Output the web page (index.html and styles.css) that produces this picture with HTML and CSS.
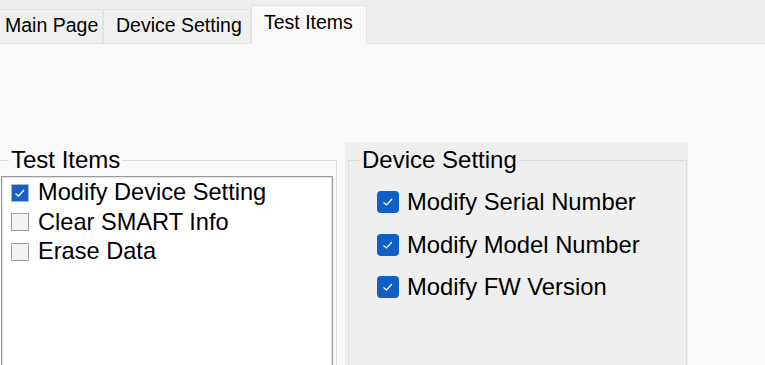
FILE: index.html
```html
<!DOCTYPE html>
<html lang="en">
<head>
    <meta charset="UTF-8">
    <title>Test Items</title>
    <link rel="stylesheet" href="styles.css">
</head>
<body>
    <nav class="tabbar">
        <div class="tab first">Main Page</div>
        <div class="tab device">Device Setting</div>
        <div class="tab active">Test Items</div>
    </nav>
    <main class="content">
        <fieldset class="group items">
            <legend>Test Items</legend>
            <div class="listbox">
                <div class="row">
                    <span class="box checked">
                        <svg viewBox="0 0 16 16" width="16" height="16"><polyline points="3.5,8.5 6.5,11 12,5" fill="none" stroke="#fff" stroke-width="1.3"/></svg>
                    </span>
                    Modify Device Setting
                </div>
                <div class="row"><span class="box"></span>Clear SMART Info</div>
                <div class="row"><span class="box"></span>Erase Data</div>
            </div>
        </fieldset>
        <div class="panel">
            <fieldset class="group settings">
                <legend>Device Setting</legend>
                <div class="opt">
                    <span class="tick">
                        <svg viewBox="0 0 22 22" width="22" height="22"><polyline points="6.5,11.5 9.5,14 15,8" fill="none" stroke="#fff" stroke-width="1.2"/></svg>
                    </span>
                    Modify Serial Number
                </div>
                <div class="opt">
                    <span class="tick">
                        <svg viewBox="0 0 22 22" width="22" height="22"><polyline points="6.5,11.5 9.5,14 15,8" fill="none" stroke="#fff" stroke-width="1.2"/></svg>
                    </span>
                    Modify Model Number
                </div>
                <div class="opt">
                    <span class="tick">
                        <svg viewBox="0 0 22 22" width="22" height="22"><polyline points="6.5,11.5 9.5,14 15,8" fill="none" stroke="#fff" stroke-width="1.2"/></svg>
                    </span>
                    Modify FW Version
                </div>
            </fieldset>
        </div>
    </main>
</body>
</html>
```

FILE: styles.css
```css
/* base */
* { box-sizing: border-box; }
html, body {
    margin: 0;
    padding: 0;
    font-family: "Liberation Sans", Arial, sans-serif;
    color: #000;
    background-color: #f9f9f9;
    overflow: hidden;
}
/* tab strip */
.tabbar {
    display: flex;
    align-items: flex-end;
    height: 44px;
    background-color: #efefef;
    border-bottom: 1px solid #e3e3e3;
}
.tab {
    height: 34px;
    padding: 4px 0 0 12px;
    font-size: 19.5px;
    line-height: 22px;
    background-color: #f0f0f0;
    border: 1px solid #e3e3e3;
    border-bottom: 0;
    white-space: nowrap;
}
.tab.first {
    width: 111px;
    margin-left: -8px;
}
.tab.device {
    width: 148px;
}
.tab.active {
    width: 116px;
    height: 39px;
    padding-top: 5px;
    margin-bottom: -1px;
    background-color: #f9f9f9;
}
/* page */
.content {
    display: flex;
    align-items: flex-start;
    gap: 8px;
    height: 321px;
    padding-top: 98px;
    overflow: hidden;
}
.group {
    margin: 0;
    min-inline-size: 0;
    border: 1px solid #dcdcdc;
}
.group legend {
    padding: 0 2px;
    font-size: 24px;
    line-height: 24px;
}
/* test items */
.items {
    width: 341px;
    margin-top: 6px;
    margin-left: -4px;
    padding: 4px 3px 0 4px;
}
.items legend {
    margin-left: 8px;
}
.listbox {
    height: 220px;
    padding: 1px 0 0 9px;
    background-color: #fff;
    border: 1px solid #9a9a9a;
    box-shadow: inset 0 0 0 1px #e2e2e2;
}
.row {
    display: flex;
    align-items: center;
    gap: 9px;
    height: 29.5px;
    font-size: 23.6px;
}
.box {
    display: flex;
    align-items: center;
    justify-content: center;
    width: 18px;
    height: 18px;
    border: 1px solid #9c9c9c;
    background-color: #f3f3f3;
}
.box.checked {
    border-color: #a9b9cf;
    background-color: #1660c8;
}
/* device setting */
.panel {
    width: 343px;
    height: 240px;
    padding: 6px 1px 0 3px;
    background-color: #efefef;
}
.settings {
    height: 240px;
    padding: 9px 0 0 0;
}
.settings legend {
    margin-left: 11px;
}
.opt {
    display: flex;
    align-items: center;
    gap: 8px;
    height: 42.5px;
    margin-left: 28px;
    font-size: 23.8px;
}
.tick {
    display: flex;
    width: 22px;
    height: 22px;
    border-radius: 4px;
    background-color: #0f5fc5;
}
```
